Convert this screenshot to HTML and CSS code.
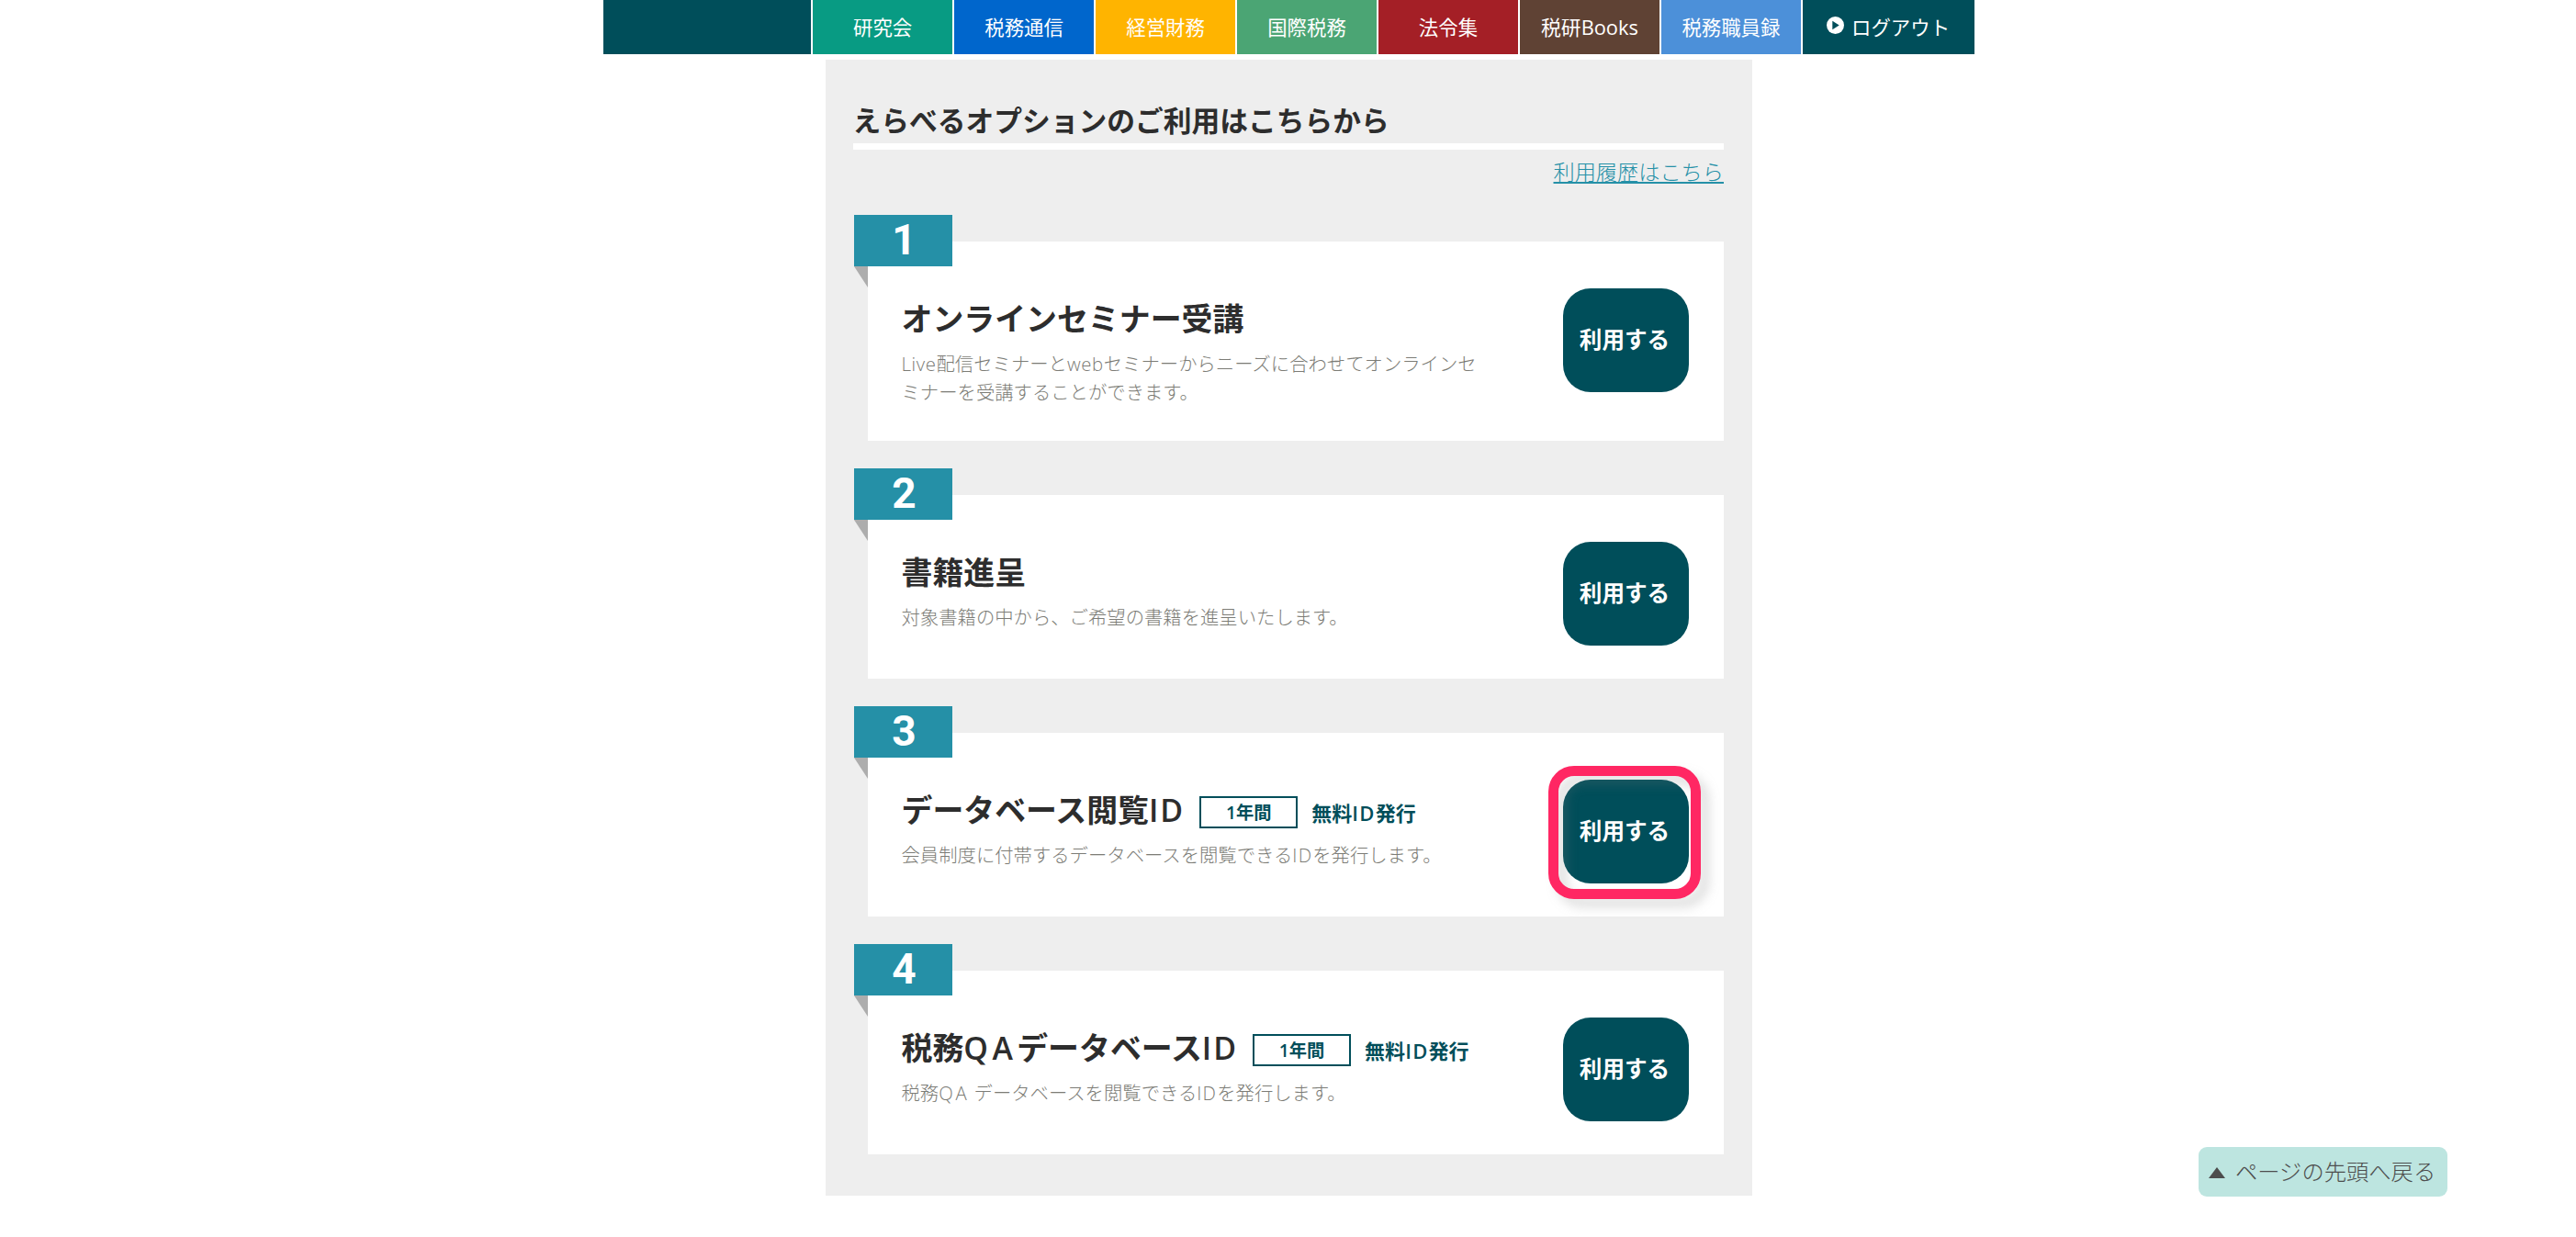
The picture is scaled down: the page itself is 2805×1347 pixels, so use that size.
FILE: index.html
```html
<!DOCTYPE html>
<html lang="ja">
<head>
  <meta charset="UTF-8">
  <title>えらべるオプション</title>
  <link rel="stylesheet" href="styles.css">
</head>
<body>

  <nav class="nav">
    <div class="nav-blank"></div>
    <a class="nav-item kenkyukai">研究会</a>
    <a class="nav-item tsushin">税務通信</a>
    <a class="nav-item zaimu">経営財務</a>
    <a class="nav-item kokusai">国際税務</a>
    <a class="nav-item hourei">法令集</a>
    <a class="nav-item books">税研Books</a>
    <a class="nav-item shokuin">税務職員録</a>
    <a class="nav-item logout">
      <svg class="logout-icon" viewBox="0 0 18 18"><circle cx="9" cy="9" r="9" fill="#fff"/><path d="M6 4.6 L13 9 L6 13.4 Z" fill="#004e5a"/></svg>
      ログアウト
    </a>
  </nav>

  <main class="panel">
    <h2 class="panel-title">えらべるオプションのご利用はこちらから</h2>
    <div class="history"><a class="history-link">利用履歴はこちら</a></div>

    <section class="card card-tall">
      <div class="number">1</div>
      <div class="card-body">
        <h3 class="card-title">オンラインセミナー受講</h3>
        <p class="card-text"><span class="latin-low">Live</span>配信セミナーと<span class="latin-low">web</span>セミナーからニーズに合わせてオンラインセ<br>ミナーを受講することができます。</p>
      </div>
      <a class="use-btn">利用する</a>
    </section>

    <section class="card">
      <div class="number">2</div>
      <div class="card-body">
        <h3 class="card-title">書籍進呈</h3>
        <p class="card-text">対象書籍の中から、ご希望の書籍を進呈いたします。</p>
      </div>
      <a class="use-btn">利用する</a>
    </section>

    <section class="card">
      <div class="number">3</div>
      <div class="card-body">
        <h3 class="card-title">データベース閲覧<span class="latin">ID</span> <span class="term">1年間</span><span class="free">無料<span class="latin">ID</span>発行</span></h3>
        <p class="card-text">会員制度に付帯するデータベースを閲覧できる<span class="latin">ID</span>を発行します。</p>
      </div>
      <a class="use-btn">利用する<span class="highlight"></span></a>
    </section>

    <section class="card">
      <div class="number">4</div>
      <div class="card-body">
        <h3 class="card-title">税務<span class="qa">QA</span>データベース<span class="latin">ID</span> <span class="term">1年間</span><span class="free">無料<span class="latin">ID</span>発行</span></h3>
        <p class="card-text">税務<span class="qa">QA</span> データベースを閲覧できる<span class="latin">ID</span>を発行します。</p>
      </div>
      <a class="use-btn">利用する</a>
    </section>
  </main>

  <a class="page-top"><span class="arrow"></span>ページの先頭へ戻る</a>

</body>
</html>
```
FILE: styles.css
```css
:root {
  --main: #004e5a;
  --teal: #2590a7;
  --text: #2d2d2d;
  --gray: #eeeeee;
}

* { box-sizing: border-box; }

body {
  margin: 0;
  height: 1347px;
  overflow: hidden;
  background: #fff;
  color: var(--text);
  font-family: "Open Sans", "Noto Sans CJK JP", sans-serif;
}

/* nav */
.nav {
  display: flex;
  gap: 1.5px;
  width: 1493px;
  height: 58.6px;
  margin-left: 656.5px;
}

.nav-blank {
  width: 227px;
  background: var(--main);
}

.nav-item {
  display: flex;
  align-items: center;
  justify-content: center;
  width: 152.5px;
  padding-top: 1px;
  color: #fff;
  font-size: 21.4px;
  line-height: 1;
  white-space: nowrap;
}

.kenkyukai { background: #089b83; }
.tsushin { background: #0066cc; }
.zaimu { background: #ffb400; }
.kokusai { background: #4ba574; }
.hourei { background: #a41f26; }
.books {
  background: #5f4234;
  font-size: 21.8px;
}
.shokuin { background: #4c90d9; }
.logout {
  width: 187px;
  gap: 8px;
  background: var(--main);
}

.logout-icon {
  width: 19px;
  height: 19px;
  margin-top: -4px;
}

/* panel */
.panel {
  width: 1008.5px;
  height: 1237px;
  margin: 6px 0 0 899px;
  padding: 44px 30.5px 0;
  background: var(--gray);
}

.panel-title {
  height: 54.5px;
  margin: 0 0 0 -1px;
  border-bottom: 7px solid #fff;
  font-size: 30.75px;
  font-weight: 600;
  line-height: 45px;
}

.history {
  height: 100px;
  padding-top: 7px;
  text-align: right;
}

.history-link {
  color: var(--teal);
  font-size: 23.2px;
  font-weight: 300;
  line-height: 34px;
  text-decoration: underline;
  text-decoration-thickness: 1.5px;
  text-underline-offset: 2px;
}

.card {
  position: relative;
  display: flex;
  justify-content: space-between;
  height: 200px;
  margin: 0 0 59px 15px;
  padding: 51px 38px 0 37px;
  background: #fff;
}

.card-tall {
  height: 217px;
}

.number {
  position: absolute;
  left: -15px;
  top: -29px;
  width: 107px;
  height: 56px;
  padding-left: 3px;
  background: var(--teal);
  color: #fff;
  font-family: Roboto, sans-serif;
  font-size: 46px;
  font-weight: 700;
  line-height: 55px;
  text-align: center;
}

/* folded corner */
.number::after {
  content: "";
  position: absolute;
  left: 0;
  top: 56px;
  border-top: 23px solid #adadad;
  border-left: 15px solid transparent;
}

.card-title {
  display: flex;
  align-items: center;
  height: 66px;
  margin: 0 0 1px;
  font-size: 33.9px;
  font-weight: 600;
  line-height: 66px;
  white-space: nowrap;
}

.latin { letter-spacing: 0.06em; }
.latin-low { letter-spacing: 0.03em; }
.qa { letter-spacing: 0.13em; }

.term {
  width: 107px;
  height: 35px;
  margin: 5px 15px 0 16px;
  border: 2px solid var(--main);
  color: var(--main);
  font-size: 19.3px;
  line-height: 31px;
  text-align: center;
}

.free {
  margin-top: 5px;
  color: var(--main);
  font-size: 22px;
}

.card-text {
  margin: 0;
  color: #7c7c76;
  font-size: 20.35px;
  font-weight: 300;
  line-height: 31px;
  white-space: nowrap;
}

.use-btn {
  position: relative;
  width: 137px;
  height: 113px;
  padding-right: 3px;
  border-radius: 30px;
  background: var(--main);
  color: #fff;
  font-size: 24.6px;
  font-weight: 700;
  line-height: 111px;
  text-align: center;
}

.highlight {
  position: absolute;
  left: -16px;
  top: -15px;
  width: 166px;
  height: 145px;
  border: 11px solid #ff2763;
  border-radius: 28px;
  filter: drop-shadow(9px 9px 6px rgba(125, 125, 125, 0.25));
}

/* back to top */
.page-top {
  position: fixed;
  left: 2393.5px;
  top: 1249px;
  display: flex;
  align-items: center;
  width: 271.5px;
  height: 54px;
  padding: 0 0 4px 11.5px;
  border-radius: 9px;
  background: #bde5e0;
  color: #4d4d4d;
  font-size: 24.3px;
  font-weight: 300;
  white-space: nowrap;
}

.arrow {
  margin: 5px 11px 0 0;
  border-bottom: 12px solid #4d4d4d;
  border-left: 9px solid transparent;
  border-right: 9px solid transparent;
}
```
